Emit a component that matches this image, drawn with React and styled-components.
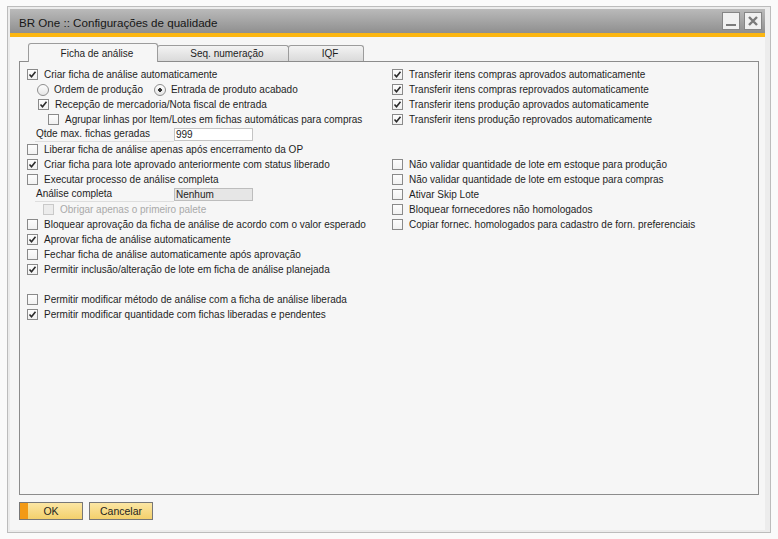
import React from "react";
import styled, { createGlobalStyle } from "styled-components";

const leftRows = [
  { kind: "check", checked: true, label: "Criar ficha de análise automaticamente" },
  { kind: "radios" },
  { kind: "check", checked: true, indent: 11, label: "Recepção de mercadoria/Nota fiscal de entrada" },
  { kind: "check", indent: 21, label: "Agrupar linhas por Item/Lotes em fichas automáticas para compras" },
  { kind: "field", label: "Qtde max. fichas geradas", value: "999" },
  { kind: "check", label: "Liberar ficha de análise apenas após encerramento da OP" },
  { kind: "check", checked: true, label: "Criar ficha para lote aprovado anteriormente com status liberado" },
  { kind: "check", label: "Executar processo de análise completa" },
  { kind: "field", label: "Análise completa", value: "Nenhum", readOnly: true },
  { kind: "check", disabled: true, indent: 16, label: "Obrigar apenas o primeiro palete" },
  { kind: "check", label: "Bloquear aprovação da ficha de análise de acordo com o valor esperado" },
  { kind: "check", checked: true, label: "Aprovar ficha de análise automaticamente" },
  { kind: "check", label: "Fechar ficha de análise automaticamente após aprovação" },
  { kind: "check", checked: true, label: "Permitir inclusão/alteração de lote em ficha de análise planejada" },
  { kind: "blank" },
  { kind: "check", label: "Permitir modificar método de análise com a ficha de análise liberada" },
  { kind: "check", checked: true, label: "Permitir modificar quantidade com fichas liberadas e pendentes" },
];

const rightRows = [
  { kind: "check", checked: true, label: "Transferir itens compras aprovados automaticamente" },
  { kind: "check", checked: true, label: "Transferir itens compras reprovados automaticamente" },
  { kind: "check", checked: true, label: "Transferir itens produção aprovados automaticamente" },
  { kind: "check", checked: true, label: "Transferir itens produção reprovados automaticamente" },
  { kind: "blank" },
  { kind: "blank" },
  { kind: "check", label: "Não validar quantidade de lote em estoque para produção" },
  { kind: "check", label: "Não validar quantidade de lote em estoque para compras" },
  { kind: "check", label: "Ativar Skip Lote" },
  { kind: "check", label: "Bloquear fornecedores não homologados" },
  { kind: "check", label: "Copiar fornec. homologados para cadastro de forn. preferenciais" },
];

const tabs = ["Ficha de análise", "Seq. numeração", "IQF"];

function CheckBox({ checked, disabled }) {
  return (
    <Box disabled={disabled}>
      {checked && (
        <svg width="9" height="9" viewBox="0 0 9 9">
          <path d="M1.5 4.5 L3.5 6.7 L7.5 1.8" fill="none" stroke="#2a2a2a" strokeWidth="1.6" />
        </svg>
      )}
    </Box>
  );
}

function OptionRow({ row }) {
  if (row.kind === "blank") return <Row />;
  if (row.kind === "radios") {
    return (
      <Row indent={10}>
        <RadioOption>
          <Radio />
          Ordem de produção
        </RadioOption>
        <RadioOption>
          <Radio selected />
          Entrada de produto acabado
        </RadioOption>
      </Row>
    );
  }
  if (row.kind === "field") {
    return (
      <Row indent={8}>
        <FieldLabel>{row.label}</FieldLabel>
        <Field readOnly={row.readOnly}>{row.value}</Field>
      </Row>
    );
  }
  return (
    <Row indent={row.indent || 0} disabled={row.disabled}>
      <CheckBox checked={row.checked} disabled={row.disabled} />
      {row.label}
    </Row>
  );
}

export default function App() {
  return (
    <>
      <GlobalStyle />
      <Page>
        <Window>
          <TitleBar>
            <Title>BR One :: Configurações de qualidade</Title>
            <WinButtons>
              <WinButton>
                <svg width="16" height="16" viewBox="0 0 16 16">
                  <rect x="3" y="11" width="10" height="2" fill="#7a7a7a" />
                </svg>
              </WinButton>
              <WinButton>
                <svg width="16" height="16" viewBox="0 0 16 16">
                  <path d="M4 4 L12 12 M12 4 L4 12" stroke="#7a7a7a" strokeWidth="2.4" />
                </svg>
              </WinButton>
            </WinButtons>
          </TitleBar>
          <Body>
            <TabRow>
              {tabs.map((t, i) => (
                <Tab key={t} active={i === 0}>
                  {t}
                </Tab>
              ))}
            </TabRow>
            <Panel>
              <Column width={365}>
                {leftRows.map((r, i) => (
                  <OptionRow key={i} row={r} />
                ))}
              </Column>
              <Column>
                {rightRows.map((r, i) => (
                  <OptionRow key={i} row={r} />
                ))}
              </Column>
            </Panel>
            <Footer>
              <Button primary>OK</Button>
              <Button>Cancelar</Button>
            </Footer>
          </Body>
        </Window>
      </Page>
    </>
  );
}

const GlobalStyle = createGlobalStyle`
  body {
    margin: 0;
    background: #fafafa;
    font-family: "Liberation Sans", Arial, sans-serif;
    color: #1e1e1e;
  }
`;

const Page = styled.div`
  padding: 6px 0 0 7px;
  height: 539px;
  box-sizing: border-box;
`;

const Window = styled.div`
  width: 764px;
  height: 527px;
  box-sizing: border-box;
  border: 1px solid #bcbcbc;
  background: #ececec;
  padding: 2px 5px 2px 2px;
  display: flex;
  flex-direction: column;
`;

const TitleBar = styled.div`
  height: 24px;
  border-bottom: 4px solid #fbb612;
  background: linear-gradient(#bababa, #8f8f8f);
  display: flex;
  align-items: center;
  justify-content: space-between;
  padding: 0 3px 0 9px;
`;

const Title = styled.div`
  font-size: 11.6px;
  color: #161616;
  padding-top: 2px;
`;

const WinButtons = styled.div`
  display: flex;
  gap: 4px;
`;

const WinButton = styled.div`
  width: 18px;
  height: 18px;
  box-sizing: border-box;
  border: 1px solid #858585;
  background: #f0f0f0;
  display: flex;
  align-items: center;
  justify-content: center;
`;

const Body = styled.div`
  flex: 1;
  background: #f6f6f6;
  padding: 6px 6px 10px 9px;
  display: flex;
  flex-direction: column;
`;

const TabRow = styled.div`
  display: flex;
  align-items: flex-end;
  height: 18px;
  padding-left: 9px;
`;

const Tab = styled.div`
  width: ${(p) => (p.active ? 130 : 0)}px;
  box-sizing: border-box;
  height: ${(p) => (p.active ? 19 : 16)}px;
  margin-bottom: ${(p) => (p.active ? -1 : 0)}px;
  border: 1px solid #9c9c9c;
  border-bottom: none;
  border-radius: 3px 3px 0 0;
  background: ${(p) => (p.active ? "#f6f6f6" : "linear-gradient(#f3f3f3, #dadada)")};
  font-size: 10px;
  color: #1e1e1e;
  display: flex;
  align-items: center;
  justify-content: center;
  padding-left: 8px;
  z-index: ${(p) => (p.active ? 1 : 0)};
  & + & {
    margin-left: -1px;
  }
  &:nth-child(2) {
    width: 132px;
  }
  &:nth-child(3) {
    width: 76px;
  }
`;

const Panel = styled.div`
  flex: 1;
  border: 1px solid #8c8c8c;
  padding: 5px 7px;
  display: flex;
`;

const Column = styled.div`
  display: flex;
  flex-direction: column;
  width: ${(p) => (p.width ? `${p.width}px` : "auto")};
  flex: ${(p) => (p.width ? "none" : 1)};
`;

const Row = styled.div`
  height: 15px;
  display: flex;
  align-items: center;
  padding-left: ${(p) => p.indent || 0}px;
  font-size: 10px;
  white-space: nowrap;
  color: ${(p) => (p.disabled ? "#a9a9a9" : "#1e1e1e")};
`;

const Box = styled.span`
  width: 11px;
  height: 11px;
  box-sizing: border-box;
  border: 1px solid ${(p) => (p.disabled ? "#c9c9c9" : "#8a8a8a")};
  background: ${(p) => (p.disabled ? "#ececec" : "linear-gradient(#fdfdfd, #f1f1f1)")};
  margin-right: 6px;
  display: flex;
  align-items: center;
  justify-content: center;
  flex: none;
`;

const RadioOption = styled.span`
  display: flex;
  align-items: center;
  margin-right: 11px;
`;

const Radio = styled.span`
  width: 12px;
  height: 12px;
  box-sizing: border-box;
  border-radius: 50%;
  border: 1px solid #8e8e8e;
  background: ${(p) =>
    p.selected
      ? "radial-gradient(circle, #333 0 1.6px, transparent 2px), linear-gradient(#fdfdfd, #e6e6e6)"
      : "linear-gradient(#fdfdfd, #e6e6e6)"};
  margin-right: 5px;
  flex: none;
`;

const FieldLabel = styled.span`
  width: 139px;
  height: 15px;
  box-sizing: border-box;
  line-height: 14px;
  padding-left: 1px;
  border-bottom: 1px solid #dedede;
`;

const Field = styled.span`
  width: 79px;
  height: 13px;
  box-sizing: border-box;
  border: 1px solid ${(p) => (p.readOnly ? "#bdbdbd" : "#c4c4c4")};
  background: ${(p) => (p.readOnly ? "#e6e6e6" : "#ffffff")};
  padding-left: 1px;
  line-height: 11px;
`;

const Footer = styled.div`
  display: flex;
  gap: 6px;
  margin-top: 7px;
`;

const Button = styled.div`
  width: 64px;
  height: 18px;
  box-sizing: border-box;
  border: 1px solid #777777;
  background: ${(p) =>
    p.primary
      ? "linear-gradient(90deg, #f39a16 0 8px, transparent 8px), linear-gradient(#fbe6a4, #f3d06c)"
      : "linear-gradient(#fbe6a4, #f3d06c)"};
  font-size: 10.5px;
  color: #1e1e1e;
  display: flex;
  align-items: center;
  justify-content: center;
`;
